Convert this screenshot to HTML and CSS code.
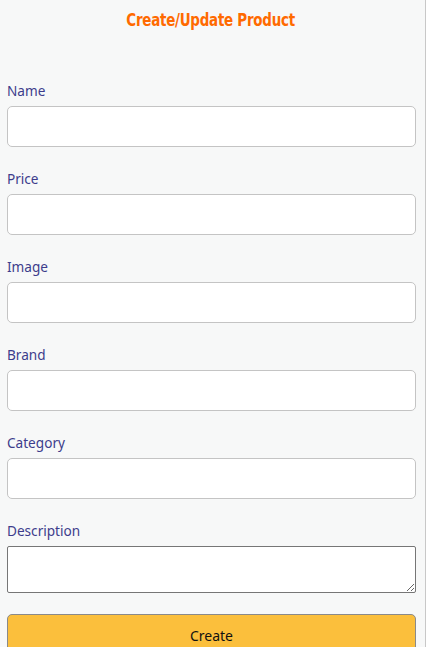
FILE: index.html
```html
<!DOCTYPE html>
<html>
<head>
<meta charset="utf-8">
<link rel="stylesheet" href="styles.css">
</head>
<body>
<div class="page">
  <h1 class="title"><span class="title-text">Create/Update Product</span></h1>
  <form class="form">
    <div class="field"><label class="label">Name</label><input class="input" type="text"></div>
    <div class="field"><label class="label">Price</label><input class="input" type="text"></div>
    <div class="field"><label class="label">Image</label><input class="input" type="text"></div>
    <div class="field"><label class="label">Brand</label><input class="input" type="text"></div>
    <div class="field"><label class="label">Category</label><input class="input" type="text"></div>
    <div class="field"><label class="label">Description</label><textarea class="textarea"></textarea></div>
    <button class="btn" type="button">Create</button>
  </form>
</div>
</body>
</html>
```
FILE: styles.css
```css
html, body {
  margin: 0;
  padding: 0;
  background: #ffffff;
}
.page {
  width: 426px;
  min-height: 647px;
  background: #f7f8f8;
  border-right: 1px solid #c8c8c8;
  box-sizing: border-box;
  padding: 0 10px 0 7px;
}
.title {
  margin: 0;
  padding-top: 9px;
  text-align: center;
  font-family: "DejaVu Sans", sans-serif;
  font-stretch: condensed;
  font-weight: bold;
  font-size: 18px;
  line-height: 22px;
  color: #ff6a00;
}
.title-text {
  display: inline-block;
  transform: scaleX(0.83);
  letter-spacing: -0.3px;
}
.form {
  display: flex;
  flex-direction: column;
  padding-top: 52px;
}
.field {
  display: flex;
  flex-direction: column;
  margin-bottom: 21px;
}
.label {
  font-family: "Noto Sans", sans-serif;
  font-size: 13.6px;
  line-height: 18px;
  color: #3d3d8c;
  margin-bottom: 6px;
  margin-top: 2px;
}
.field:first-child .label {
  margin-top: -1px;
}
.input {
  box-sizing: border-box;
  width: 409px;
  height: 41px;
  border: 1px solid #c4c4c4;
  border-radius: 5px;
  background: #fff;
  margin: 0;
}
.textarea {
  box-sizing: border-box;
  width: 409px;
  height: 47px;
  border: 1px solid #767676;
  border-radius: 2px;
  background: #fff;
  margin: 0;
  resize: vertical;
  display: block;
}
.btn {
  box-sizing: border-box;
  width: 409px;
  height: 42px;
  background: #fbbf3c;
  border: 1px solid #8a8a8a;
  border-radius: 5px;
  font-family: "Noto Sans", sans-serif;
  font-size: 14px;
  color: #111;
  padding: 0;
}
```
